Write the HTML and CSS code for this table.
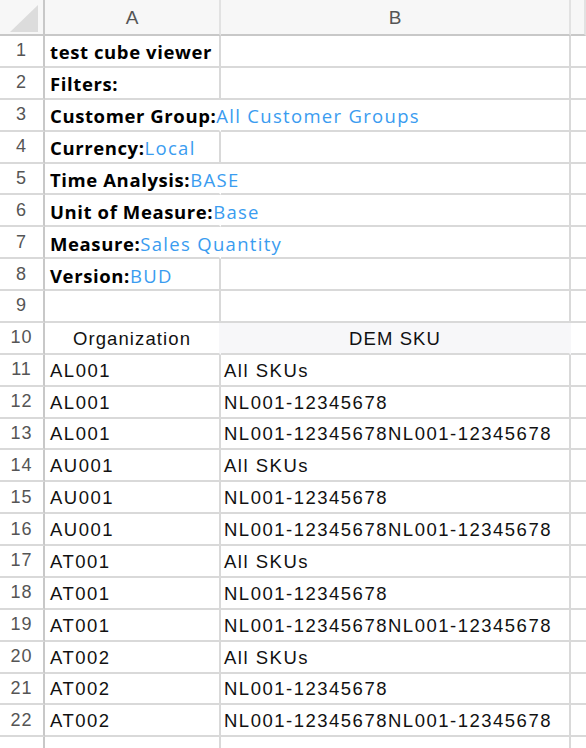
FILE: index.html
```html
<!DOCTYPE html>
<html>
<head>
<meta charset="utf-8">
<link rel="stylesheet" href="styles.css">
</head>
<body>
<div class="sheet">
  <div class="corner hdr"><div class="tri"></div></div>
  <div class="hdr colh">A</div>
  <div class="hdr colh">B</div>
  <div class="hdr colh"></div>

  <div class="rn">1</div><div class="c cal">test cube viewer</div><div class="c"></div><div class="c x"></div>
  <div class="rn">2</div><div class="c cal">Filters:</div><div class="c"></div><div class="c x"></div>
  <div class="rn">3</div><div class="c cal spill">Customer Group:<span class="v">All Customer Groups</span></div><div class="c"></div><div class="c x"></div>
  <div class="rn">4</div><div class="c cal">Currency:<span class="v">Local</span></div><div class="c"></div><div class="c x"></div>
  <div class="rn">5</div><div class="c cal spill">Time Analysis:<span class="v">BASE</span></div><div class="c"></div><div class="c x"></div>
  <div class="rn">6</div><div class="c cal spill">Unit of Measure:<span class="v">Base</span></div><div class="c"></div><div class="c x"></div>
  <div class="rn">7</div><div class="c cal spill">Measure:<span class="v">Sales Quantity</span></div><div class="c"></div><div class="c x"></div>
  <div class="rn">8</div><div class="c cal">Version:<span class="v">BUD</span></div><div class="c"></div><div class="c x"></div>
  <div class="rn">9</div><div class="c"></div><div class="c"></div><div class="c x"></div>
  <div class="rn">10</div><div class="c th tha">Organization</div><div class="c th thb">DEM SKU</div><div class="c x"></div>
  <div class="rn">11</div><div class="c d">AL001</div><div class="c d b">All SKUs</div><div class="c x"></div>
  <div class="rn">12</div><div class="c d">AL001</div><div class="c d b">NL001-12345678</div><div class="c x"></div>
  <div class="rn">13</div><div class="c d">AL001</div><div class="c d b">NL001-12345678NL001-12345678</div><div class="c x"></div>
  <div class="rn">14</div><div class="c d">AU001</div><div class="c d b">All SKUs</div><div class="c x"></div>
  <div class="rn">15</div><div class="c d">AU001</div><div class="c d b">NL001-12345678</div><div class="c x"></div>
  <div class="rn">16</div><div class="c d">AU001</div><div class="c d b">NL001-12345678NL001-12345678</div><div class="c x"></div>
  <div class="rn">17</div><div class="c d">AT001</div><div class="c d b">All SKUs</div><div class="c x"></div>
  <div class="rn">18</div><div class="c d">AT001</div><div class="c d b">NL001-12345678</div><div class="c x"></div>
  <div class="rn">19</div><div class="c d">AT001</div><div class="c d b">NL001-12345678NL001-12345678</div><div class="c x"></div>
  <div class="rn">20</div><div class="c d">AT002</div><div class="c d b">All SKUs</div><div class="c x"></div>
  <div class="rn">21</div><div class="c d">AT002</div><div class="c d b">NL001-12345678</div><div class="c x"></div>
  <div class="rn">22</div><div class="c d">AT002</div><div class="c d b">NL001-12345678NL001-12345678</div><div class="c x"></div>
  <div class="rn"></div><div class="c"></div><div class="c"></div><div class="c x"></div>
</div>
</body>
</html>
```

FILE: styles.css
```css
html, body {
  margin: 0;
  padding: 0;
  background: #fff;
  overflow: hidden;
}
.sheet {
  display: grid;
  grid-template-columns: 45px 176px 350px 1fr;
  grid-template-rows: 36px repeat(23, 31.89px);
  width: 586px;
  height: 748px;
  overflow: hidden;
}
.sheet > div {
  box-sizing: border-box;
  border-right: 2px solid #d9d9d9;
  border-bottom: 2px solid #d9d9d9;
  white-space: nowrap;
  display: flex;
  align-items: center;
  min-width: 0;
}
.hdr {
  background: #f7f7f7;
  border-bottom-color: #c8c8c8 !important;
  border-right-color: #e2e2e2 !important;
}
.corner {
  position: relative;
  border-right-color: #c8c8c8 !important;
}
.tri {
  position: absolute;
  left: 10px;
  top: 5px;
  width: 0;
  height: 0;
  border-left: 28px solid transparent;
  border-bottom: 27px solid #dcdcdc;
}
.colh {
  justify-content: center;
  font-family: "Liberation Sans", Arial, sans-serif;
  font-size: 19px;
  color: #555;
  padding-top: 2px;
}
.rn {
  justify-content: center;
  font-family: "Liberation Sans", Arial, sans-serif;
  font-size: 18px;
  letter-spacing: 1px;
  color: #555;
  border-right-color: #c8c8c8 !important;
}
.c {
  padding-left: 5px;
}
.c.b {
  padding-left: 3px;
}
.cal {
  font-family: "Open Sans", sans-serif;
  font-weight: 700;
  font-size: 18.5px;
  letter-spacing: 0.6px;
  color: #000;
  overflow: visible;
  padding-top: 2px;
}
.spill {
  border-right-color: transparent !important;
}
.v {
  font-weight: 400;
  color: #3a9cf0;
  letter-spacing: 1.3px;
}
.d, .th {
  font-family: "Liberation Sans", Arial, sans-serif;
  font-size: 18.5px;
  letter-spacing: 1.5px;
  color: #111;
  padding-top: 2px;
}
.th {
  justify-content: center;
  padding-left: 0;
  letter-spacing: 1.1px;
}
.tha {
  border-right-color: #f7f7f9 !important;
}
.thb {
  background: #f7f7f9;
  border-right-color: #f7f7f9 !important;
}
.x {
  border-right: none !important;
}
```
